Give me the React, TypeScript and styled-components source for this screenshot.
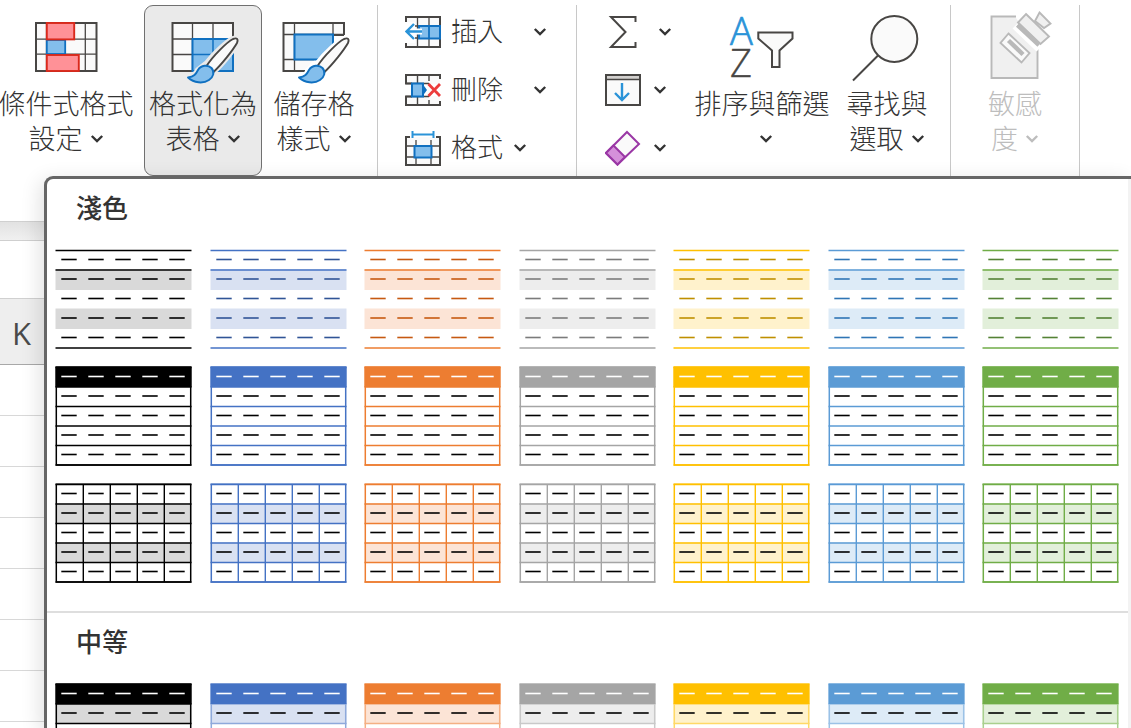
import React from 'react';
import styled, { createGlobalStyle, css } from 'styled-components';

const GlobalStyle = createGlobalStyle`
  *, *::before, *::after { box-sizing: border-box; }
  body {
    margin: 0;
    background: #fff;
    color: #333;
    font-family: "Open Sans", "Noto Sans CJK TC", sans-serif;
  }
  button { font: inherit; color: inherit; }
`;

/* ---------- page ---------- */

const Page = styled.div`
  position: relative;
  display: flex;
  flex-direction: column;
  height: 100vh;
  overflow: hidden;
`;

const Ribbon = styled.header`
  display: flex;
  flex: none;
  align-items: flex-start;
  height: 221px;
  padding-top: 5px;
  background: #fff;
`;

const Group = styled.div<{ $width: number; $gap?: number; $start?: number }>`
  display: flex;
  flex: none;
  align-items: flex-start;
  gap: ${(p) => p.$gap ?? 0}px;
  width: ${(p) => p.$width}px;
  height: 172px;
  padding-left: ${(p) => p.$start ?? 0}px;
  border-right: 1px solid #c8c8c8;
`;

const Spacer = styled.div<{ $width: number }>`
  flex: none;
  width: ${(p) => p.$width}px;
`;

const LargeButton = styled.button<{ $width: number; $active?: boolean }>`
  display: flex;
  flex: none;
  flex-direction: column;
  align-items: center;
  width: ${(p) => p.$width}px;
  height: 171px;
  padding: 5px 0 0;
  border: 1px solid transparent;
  border-radius: 9px;
  background: transparent;
  ${(p) =>
    p.$active &&
    css`
      border-color: #707070;
      background: #eaeaea;
    `}
  &:disabled { color: #bdbdbd; }
`;

const LargeIcon = styled.svg`
  display: block;
  flex: none;
  width: 72px;
  height: 72px;
  margin-bottom: 3px;
  overflow: visible;
`;

const LabelLine = styled.span`
  display: flex;
  align-items: center;
  justify-content: center;
  height: 35px;
  font-size: 27px;
  font-weight: 300;
  line-height: 35px;
  white-space: nowrap;

  svg { margin-left: 7px; }
`;

const SmallColumn = styled.div`
  display: flex;
  flex-direction: column;
`;

const SmallButton = styled.button<{ $gap?: number }>`
  display: flex;
  align-items: center;
  gap: ${(p) => p.$gap ?? 10}px;
  height: 58px;
  padding: 0 0 4px;
  border: 0;
  background: transparent;
  font-size: 26px;
  font-weight: 300;
  line-height: 36px;
  white-space: nowrap;
`;

const SmallIcon = styled.svg`
  display: block;
  flex: none;
  width: 36px;
  height: 36px;
`;

const SmallLabel = styled.span<{ $wide?: boolean }>`
  width: ${(p) => (p.$wide ? 72 : 52)}px;
  padding-bottom: 3px;
  text-align: left;
`;

const ChevronSvg = styled.svg`
  display: block;
  flex: none;
  width: 14px;
  height: 10px;
`;

const Chevron = () => (
  <ChevronSvg viewBox="0 0 14 10" fill="none" stroke="currentColor" strokeWidth="2.4" aria-hidden="true">
    <path d="M1.800 2 L7 7 L12.200 2" />
  </ChevronSvg>
);

/* ---------- sheet behind the gallery ---------- */

const RibbonShadow = styled.div`
  flex: none;
  height: 19px;
  border-top: 1px solid #d0d0d0;
  background: linear-gradient(#e2e2e2, #f0f0f0);
`;

const FormulaBar = styled.div`
  flex: none;
  height: 58px;
  border-top: 1px solid #cfcfcf;
  background: #fff;
`;

const Sheet = styled.table`
  width: 100%;
  border-collapse: collapse;
  table-layout: fixed;

  th {
    height: 66px;
    padding: 2px 0 0 12px;
    border-top: 1px solid #d0d0d0;
    border-bottom: 1px solid #a8a8a8;
    background: #eee;
    color: #4a4a4a;
    font-size: 31px;
    font-weight: 400;
    line-height: 40px;
    text-align: left;
  }
  td {
    height: 51px;
    padding: 0;
    border-bottom: 1px solid #d8d8d8;
  }
`;

/* ---------- style gallery ---------- */

const Gallery = styled.div`
  position: absolute;
  top: 176px;
  right: 0;
  bottom: 0;
  left: 44px;
  overflow: hidden;
  border: solid #666;
  border-width: 3px 0 0 3px;
  border-radius: 9px 0 0 0;
  background: #fff;
  box-shadow: -4px 4px 20px rgba(0, 0, 0, 0.12);
`;

const GalleryBody = styled.div`
  border-right: 3px solid #f3f3f3;
`;

const Section = styled.section`
  padding-bottom: 28px;
  border-bottom: 2px solid #dedede;
`;

const SectionTitle = styled.h2`
  height: 70px;
  margin: 0;
  padding-left: 29px;
  color: #333;
  font-size: 26px;
  font-weight: 500;
  line-height: 58px;
`;

const Swatches = styled.div`
  display: grid;
  grid-template-columns: repeat(7, 137px);
  justify-content: space-between;
  row-gap: 17px;
  padding: 0 9px 0 8px;
`;

const Swatch = styled.button`
  display: block;
  width: 137px;
  height: 100px;
  padding: 0;
  border: 0;
  background: transparent;

  svg { display: block; width: 137px; height: 100px; }
`;

type Kind = 'lines' | 'header' | 'grid' | 'medium';

interface Tone {
  name: string;
  line: string;
  band: string;
  dash: string;
  soft: string;
}

const tones: Tone[] = [
  { name: '黑色', line: '#000000', band: '#d9d9d9', dash: '#000000', soft: '#000000' },
  { name: '藍色', line: '#4472c4', band: '#d9e1f2', dash: '#305496', soft: '#8ea9db' },
  { name: '橙色', line: '#ed7d31', band: '#fce4d6', dash: '#c65911', soft: '#f4b084' },
  { name: '灰色', line: '#a5a5a5', band: '#ededed', dash: '#7b7b7b', soft: '#c9c9c9' },
  { name: '金色', line: '#ffc000', band: '#fff2cc', dash: '#bf8f00', soft: '#ffd966' },
  { name: '淺藍', line: '#5b9bd5', band: '#ddebf7', dash: '#2f75b5', soft: '#9bc2e6' },
  { name: '綠色', line: '#70ad47', band: '#e2efda', dash: '#548235', soft: '#a9d08e' },
];

const columns = [0, 1, 2, 3, 4];

const Thumbnail = ({ kind, tone }: { kind: Kind; tone: Tone }) => {
  const headed = kind === 'header' || kind === 'medium';
  const bandRows = kind === 'header' ? [] : [1, 3];
  const rules = kind === 'lines' ? [1.5, 21, 99] : [1.5, 21, 40.5, 60, 79.5, 99];
  const edge = kind === 'medium' ? tone.soft : tone.line;
  return (
    <svg viewBox="0 0 137 100" aria-hidden="true">
      {bandRows.map((r) => (
        <rect key={r} x="0.5" y={r * 19.5 + 1} width="136" height="20.5" fill={tone.band} />
      ))}
      {rules.map((y) => (
        <path key={y} d={`M0.5 ${y}H136.5`} stroke={edge} strokeWidth="1.5" />
      ))}
      {kind === 'grid' &&
        [28.3, 55.3, 82.3, 109.3].map((x) => (
          <path key={x} d={`M${x} 1V99`} stroke={edge} strokeWidth="1.4" />
        ))}
      {kind !== 'lines' && (
        <rect x="1.3" y="1.2" width="134.4" height="97.8" fill="none" stroke={edge} strokeWidth="1.5" />
      )}
      {headed && <rect x="0.5" y="0.5" width="136" height="20.5" fill={tone.line} />}
      {columns.map((row) => (
        <g
          key={row}
          stroke={headed && row === 0 ? '#fff' : kind === 'lines' ? tone.dash : '#000'}
          strokeWidth="1.6"
        >
          {columns.map((c) => (
            <path key={c} d={`M${6.3 + c * 27} ${10.5 + row * 19.5}h15.4`} />
          ))}
        </g>
      ))}
    </svg>
  );
};

const SwatchGroup = ({ title, kinds }: { title: string; kinds: Kind[] }) => (
  <Section>
    <SectionTitle>{title}</SectionTitle>
    <Swatches>
      {kinds.map((kind) =>
        tones.map((tone) => (
          <Swatch key={kind + tone.name} type="button" aria-label={`${title} ${tone.name}`}>
            <Thumbnail kind={kind} tone={tone} />
          </Swatch>
        )),
      )}
    </Swatches>
  </Section>
);

/* ---------- icons ---------- */

const ink = '#484644';
const paper = '#fafafa';
const blue = '#1070c0';
const sky = '#83beec';

const Brush = ({ halo }: { halo: string }) => (
  <>
    <path
      d="M20 66C27 66 29 63 31 59L40 52C47 43 60 31 66 28C70 26.5 71.5 28 70 32C66 39 55 53 47 60C46 66 42 69 42 69C36 73 26 72 20 66Z"
      fill={halo}
      stroke={halo}
      strokeWidth="6"
      strokeLinejoin="round"
    />
    <path
      d="M39.5 55C46 45 60 31 66 28C70 26.5 71.5 28 70 32C66 39 55 53 46.5 61Z"
      fill={paper}
      stroke={ink}
      strokeWidth="1.9"
    />
    <path
      d="M21 66.5C27 66 29 63 31 59C34 54 41 53.5 44.5 57C48 61 46.5 66 42 69C36 73 27 72 21 66.5Z"
      fill={sky}
      stroke={blue}
      strokeWidth="1.9"
      strokeLinejoin="round"
    />
  </>
);

const ConditionalIcon = () => (
  <LargeIcon viewBox="0 0 72 72" fill="none" aria-hidden="true">
    <rect x="6" y="12" width="60.5" height="48" fill={paper} />
    <path d="M6 28.2H66M6 43.2H66M55.3 12V60M16.5 12V60" stroke={ink} strokeWidth="1.3" />
    <rect x="6" y="12" width="60.5" height="48" stroke={ink} strokeWidth="2" />
    <rect x="16.8" y="29" width="18.4" height="14" fill={sky} stroke={blue} strokeWidth="1.8" />
    <rect x="16.8" y="12" width="27.4" height="16.4" fill="#ff9197" stroke="#da291c" strokeWidth="1.9" />
    <rect x="16.8" y="44" width="32" height="16" fill="#ff9197" stroke="#da291c" strokeWidth="1.9" />
  </LargeIcon>
);

const TableIcon = () => (
  <LargeIcon viewBox="0 0 72 72" fill="none" aria-hidden="true">
    <rect x="5.5" y="12" width="60.5" height="48" fill={paper} />
    <path d="M5.5 28H66M5.5 43.5H25M25.5 12V60M46 12V28" stroke={ink} strokeWidth="1.3" />
    <rect x="5.5" y="12" width="60.5" height="48" stroke={ink} strokeWidth="2" />
    <rect x="25.5" y="28" width="40.5" height="32" fill={sky} stroke={blue} strokeWidth="2" />
    <path d="M46 28V60M25.5 43.5H66" stroke={blue} strokeWidth="1.5" />
    <Brush halo="#eaeaea" />
  </LargeIcon>
);

const CellStyleIcon = () => (
  <LargeIcon viewBox="0 0 72 72" fill="none" aria-hidden="true">
    <path d="M5.5 12H66V24H57L26 60H5.5Z" fill={paper} />
    <path d="M5.5 23.5H66M5.5 48.5H36M16.5 12V60M55 12V24" stroke={ink} strokeWidth="1.3" />
    <path d="M66 24V12H5.5V60H27M56 24H66" stroke={ink} strokeWidth="2" />
    <path d="M16.5 48.5V23.5H55V38L44 48.5Z" fill={sky} />
    <path d="M55 34V23.5H16.5V48.5H42" stroke={blue} strokeWidth="2" />
    <Brush halo="#fff" />
  </LargeIcon>
);

const SortFilterIcon = () => (
  <LargeIcon viewBox="0 0 72 72" fill="none" aria-hidden="true">
    <g fontFamily="'Open Sans', sans-serif" fontWeight="300" fontSize="38">
      <text x="4" y="33.5" fill="#2a93d8" stroke="#2a93d8" strokeWidth="0.7">A</text>
      <text x="4" y="66" fill={ink} stroke={ink} strokeWidth="0.4">Z</text>
    </g>
    <path d="M32.3 21.5H66.5V27.5L53.5 39.5V56H46V39.5L32.3 27.5Z" fill={paper} stroke={ink} strokeWidth="2" />
  </LargeIcon>
);

const FindIcon = () => (
  <LargeIcon viewBox="0 0 72 72" fill="none" stroke={ink} strokeWidth="2" aria-hidden="true">
    <circle cx="43.3" cy="28" r="23" fill={paper} />
    <path d="M27 44.5L2 69.5" />
  </LargeIcon>
);

const SensitivityIcon = () => (
  <LargeIcon viewBox="0 0 72 72" fill="none" stroke="#b9b9b9" strokeWidth="1.9" aria-hidden="true">
    <path d="M36 5.5H12.5V67H58.5V37Z" fill="#f0f0f0" stroke="none" />
    <path d="M37 5.5H12.5V67H58.5V37" />
    <path d="M36 15L60 38" stroke="#fff" strokeWidth="7" />
    <path d="M29.5 22.5L50.5 42L42.5 51.5L21.5 32Z" fill={paper} />
    <path d="M29.5 29.5L44 43.5" strokeWidth="4.5" />
    <path d="M60.5 1.5L71.5 12.5L65 17L56 10Z" fill="#f0f0f0" />
    <path d="M47 3L70 25.5L61.5 33L39 11.5Z" fill="#f0f0f0" />
    <path d="M38.5 14L60 34" strokeWidth="4.5" />
  </LargeIcon>
);

const InsertIcon = () => (
  <SmallIcon viewBox="0 0 36 36" fill="none" aria-hidden="true">
    <rect x="1" y="3" width="34" height="30" fill={paper} />
    <path d="M12.5 3V33M24 3V33M1 12H35M1 24H35" stroke={ink} strokeWidth="1.3" />
    <rect x="1" y="3" width="34" height="30" stroke={ink} strokeWidth="2" />
    <rect x="0" y="8" width="10" height="21" fill="#fff" />
    <rect x="14" y="12" width="21" height="12.5" fill={sky} stroke={blue} strokeWidth="2" />
    <path d="M24 12V24.5" stroke={blue} strokeWidth="1.8" />
    <path d="M2 17.5H17" stroke="#fff" strokeWidth="6" />
    <path d="M1.5 17.5H17M9 10L1.5 17.5L9 25" stroke="#2a93d8" strokeWidth="2.4" />
  </SmallIcon>
);

const DeleteIcon = () => (
  <SmallIcon viewBox="0 0 36 36" fill="none" aria-hidden="true">
    <path d="M1 3H35V12H1ZM1 24H35V33H1Z" fill={paper} />
    <path d="M12.5 3V33M24 3V9M24 28V33M1 11.5H24M1 24.5H24" stroke={ink} strokeWidth="1.4" />
    <path d="M35 7V3H1V11.5H7M35 29V33H1V24.5H7" stroke={ink} strokeWidth="2" />
    <path d="M7 11.5H18V24.5H7Z" fill={sky} stroke={blue} strokeWidth="2" />
    <path d="M18 12.500L22 18L18 23.5Z" fill={blue} />
    <path d="M23.5 12L35 24M35 12L23.5 24" stroke="#ec3b3b" strokeWidth="2.8" />
  </SmallIcon>
);

const FormatIcon = () => (
  <SmallIcon viewBox="0 0 36 36" fill="none" aria-hidden="true">
    <rect x="1" y="7" width="34" height="28" fill={paper} />
    <path d="M11 10V35M26 10V35M1 16H35M1 27H35" stroke={ink} strokeWidth="1.3" />
    <path d="M5 7H1V35H35V7H31" stroke={ink} strokeWidth="2" />
    <rect x="9.5" y="16" width="17" height="11.5" fill={sky} stroke={blue} strokeWidth="2" />
    <path d="M7.5 4.5H28.5M7.5 1V8M28.5 1V8" stroke="#2a93d8" strokeWidth="2" />
  </SmallIcon>
);

const SumIcon = () => (
  <SmallIcon viewBox="0 0 36 36" fill="none" stroke={ink} strokeWidth="2" aria-hidden="true">
    <path d="M30.5 8V3H6L20.5 18L6 33H30.5V28" />
  </SmallIcon>
);

const FillIcon = () => (
  <SmallIcon viewBox="0 0 36 36" fill="none" aria-hidden="true">
    <rect x="1" y="3" width="34" height="30" fill={paper} />
    <rect x="1" y="3" width="34" height="4.5" fill="#d2d0ce" />
    <path d="M1 7.5H35" stroke={ink} strokeWidth="1.5" />
    <rect x="1" y="3" width="34" height="30" stroke={ink} strokeWidth="2" />
    <path d="M17 11V28M10 21L17 28L24 21" stroke="#2a93d8" strokeWidth="2.4" />
  </SmallIcon>
);

const EraserIcon = () => (
  <SmallIcon viewBox="0 0 36 36" fill="none" stroke="#9a37a5" strokeWidth="2" aria-hidden="true">
    <path d="M22 2L34 14L12.5 34.5L1 23Z" fill={paper} />
    <path d="M8.5 15.5L20 27L12.5 34.5L1 23Z" fill="#d590da" />
  </SmallIcon>
);

/* ---------- app ---------- */

interface LargeProps {
  icon: React.ReactNode;
  first: string;
  second?: string;
  width: number;
  active?: boolean;
  disabled?: boolean;
}

const LargeCommand = ({ icon, first, second, width, active, disabled }: LargeProps) => (
  <LargeButton type="button" $width={width} $active={active} disabled={disabled}>
    {icon}
    <LabelLine>{first}</LabelLine>
    <LabelLine>
      {second}
      <Chevron />
    </LabelLine>
  </LargeButton>
);

export default function App() {
  return (
    <>
      <GlobalStyle />
      <Page>
        <Ribbon>
          <Group $width={378} $gap={0}>
            <LargeCommand icon={<ConditionalIcon />} first="條件式格式" second="設定" width={132} />
            <Spacer $width={12} />
            <LargeCommand icon={<TableIcon />} first="格式化為" second="表格" width={118} active />
            <LargeCommand icon={<CellStyleIcon />} first="儲存格" second="樣式" width={104} />
          </Group>
          <Group $width={199} $start={27}>
            <SmallColumn>
              <SmallButton type="button">
                <InsertIcon />
                <SmallLabel $wide>插入</SmallLabel>
                <Chevron />
              </SmallButton>
              <SmallButton type="button">
                <DeleteIcon />
                <SmallLabel $wide>刪除</SmallLabel>
                <Chevron />
              </SmallButton>
              <SmallButton type="button">
                <FormatIcon />
                <SmallLabel>格式</SmallLabel>
                <Chevron />
              </SmallButton>
            </SmallColumn>
          </Group>
          <Group $width={374} $start={28}>
            <SmallColumn>
              <SmallButton type="button" $gap={17} aria-label="自動加總">
                <SumIcon />
                <Chevron />
              </SmallButton>
              <SmallButton type="button" $gap={12} aria-label="填滿">
                <FillIcon />
                <Chevron />
              </SmallButton>
              <SmallButton type="button" $gap={12} aria-label="清除">
                <EraserIcon />
                <Chevron />
              </SmallButton>
            </SmallColumn>
            <Spacer $width={18} />
            <LargeCommand icon={<SortFilterIcon />} first="排序與篩選" width={144} />
            <LargeCommand icon={<FindIcon />} first="尋找與" second="選取" width={106} />
          </Group>
          <Group $width={129} $start={12}>
            <LargeCommand icon={<SensitivityIcon />} first="敏感" second="度" width={104} disabled />
          </Group>
        </Ribbon>
        <RibbonShadow />
        <FormulaBar />
        <Sheet>
          <thead>
            <tr>
              <th scope="col">K</th>
            </tr>
          </thead>
          <tbody>
            {Array.from({ length: 8 }, (_, i) => (
              <tr key={i}>
                <td />
              </tr>
            ))}
          </tbody>
        </Sheet>
        <Gallery>
          <GalleryBody>
            <SwatchGroup title="淺色" kinds={['lines', 'header', 'grid']} />
            <SwatchGroup title="中等" kinds={['medium']} />
          </GalleryBody>
        </Gallery>
      </Page>
    </>
  );
}
